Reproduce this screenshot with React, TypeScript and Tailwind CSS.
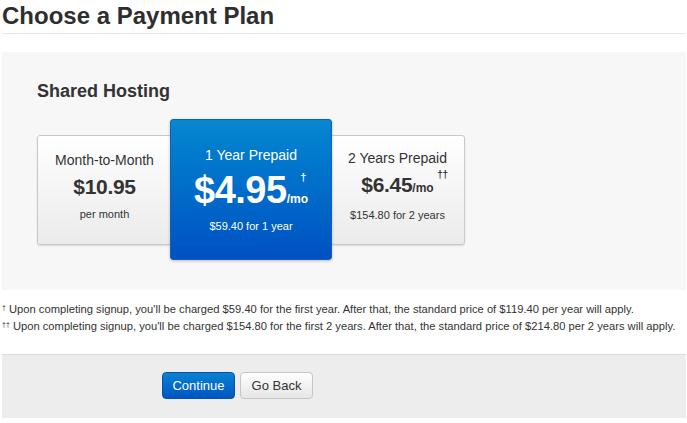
import React from 'react';

const PlanCard = ({ title, price, dagger, note, perMonth }: { title: string; price: string; dagger?: string; note: string; perMonth?: boolean }) => (
  <div className="w-[135px] h-[110px] shrink-0 flex flex-col items-center justify-center pb-[8px] rounded-[3px] border border-[#c9c9c9] bg-gradient-to-b from-white to-[#ebebeb] shadow-[0_1px_2px_rgba(0,0,0,0.12)] text-[#333]">
    <div className="text-[14px] leading-[18px]">{title}</div>
    <div className="relative mt-[6px] text-[21px] font-bold leading-[24px] tracking-[-0.3px]">
      {price}
      {perMonth && <span className="text-[12px] font-bold tracking-normal">/mo</span>}
      {dagger && <span className="absolute -right-[14px] -top-[3px] text-[10px] font-bold leading-none">{dagger}</span>}
    </div>
    <div className="mt-[8px] text-[11px] leading-[14px]">{note}</div>
  </div>
);

export default function App() {
  return (
    <div className="min-h-[423px] bg-white pl-[2px] pr-[1px] text-[#333]" style={{ fontFamily: '"Liberation Sans", Arial, sans-serif' }}>
      <h1 className="pt-[1px] pb-[2px] text-[24px] font-bold leading-[30px] text-[#2e2e2e] border-b border-[#e8e8e8]">
        Choose a Payment Plan
      </h1>

      <div className="mt-[18px] bg-[#f7f7f7] pl-[35px] pt-[28px] pb-[30px]">
        <h2 className="text-[18px] font-bold leading-[22px] text-[#333]">Shared Hosting</h2>
        <div className="mt-[17px] flex items-center">
          <PlanCard title="Month-to-Month" price="$10.95" note="per month" />
          <div className="relative z-10 -mx-[2px] w-[162px] h-[141px] shrink-0 flex flex-col items-center justify-center rounded-[3px] border border-[#0a63b8] bg-gradient-to-b from-[#0987cf] to-[#0250c3] text-white shadow-[0_1px_3px_rgba(0,0,0,0.25)]">
            <div className="text-[14px] leading-[18px]">1 Year Prepaid</div>
            <div className="relative mt-[6px] text-[38px] font-bold leading-[40px] tracking-[-0.5px]">
              $4.95<span className="text-[12px] font-bold tracking-normal">/mo</span>
              <span className="absolute right-[2px] top-[2px] text-[11px] font-bold leading-none">†</span>
            </div>
            <div className="mt-0 text-[11px] leading-[14px]">$59.40 for 1 year</div>
          </div>
          <PlanCard title="2 Years Prepaid" price="$6.45" perMonth dagger="††" note="$154.80 for 2 years" />
        </div>
      </div>

      <div className="mt-[11px] text-[11.2px] leading-[17px] text-[#333]">
        <p><sup className="text-[7px]">†</sup> Upon completing signup, you'll be charged $59.40 for the first year. After that, the standard price of $119.40 per year will apply.</p>
        <p><sup className="text-[7px]">††</sup> Upon completing signup, you'll be charged $154.80 for the first 2 years. After that, the standard price of $214.80 per 2 years will apply.</p>
      </div>

      <div className="mt-[19px] h-[64px] border-t border-[#dcdcdc] bg-[#ededed] pl-[160px] pt-[17px]">
        <div className="flex gap-[5px]">
          <button className="h-[27px] w-[73px] rounded-[4px] border border-[#0453aa] bg-gradient-to-b from-[#0b82d2] to-[#0355c2] text-[13px] text-white">
            Continue
          </button>
          <button className="h-[27px] w-[73px] rounded-[4px] border border-[#c6c6c6] bg-gradient-to-b from-white to-[#e6e6e6] text-[13px] text-[#333]">
            Go Back
          </button>
        </div>
      </div>
    </div>
  );
}
